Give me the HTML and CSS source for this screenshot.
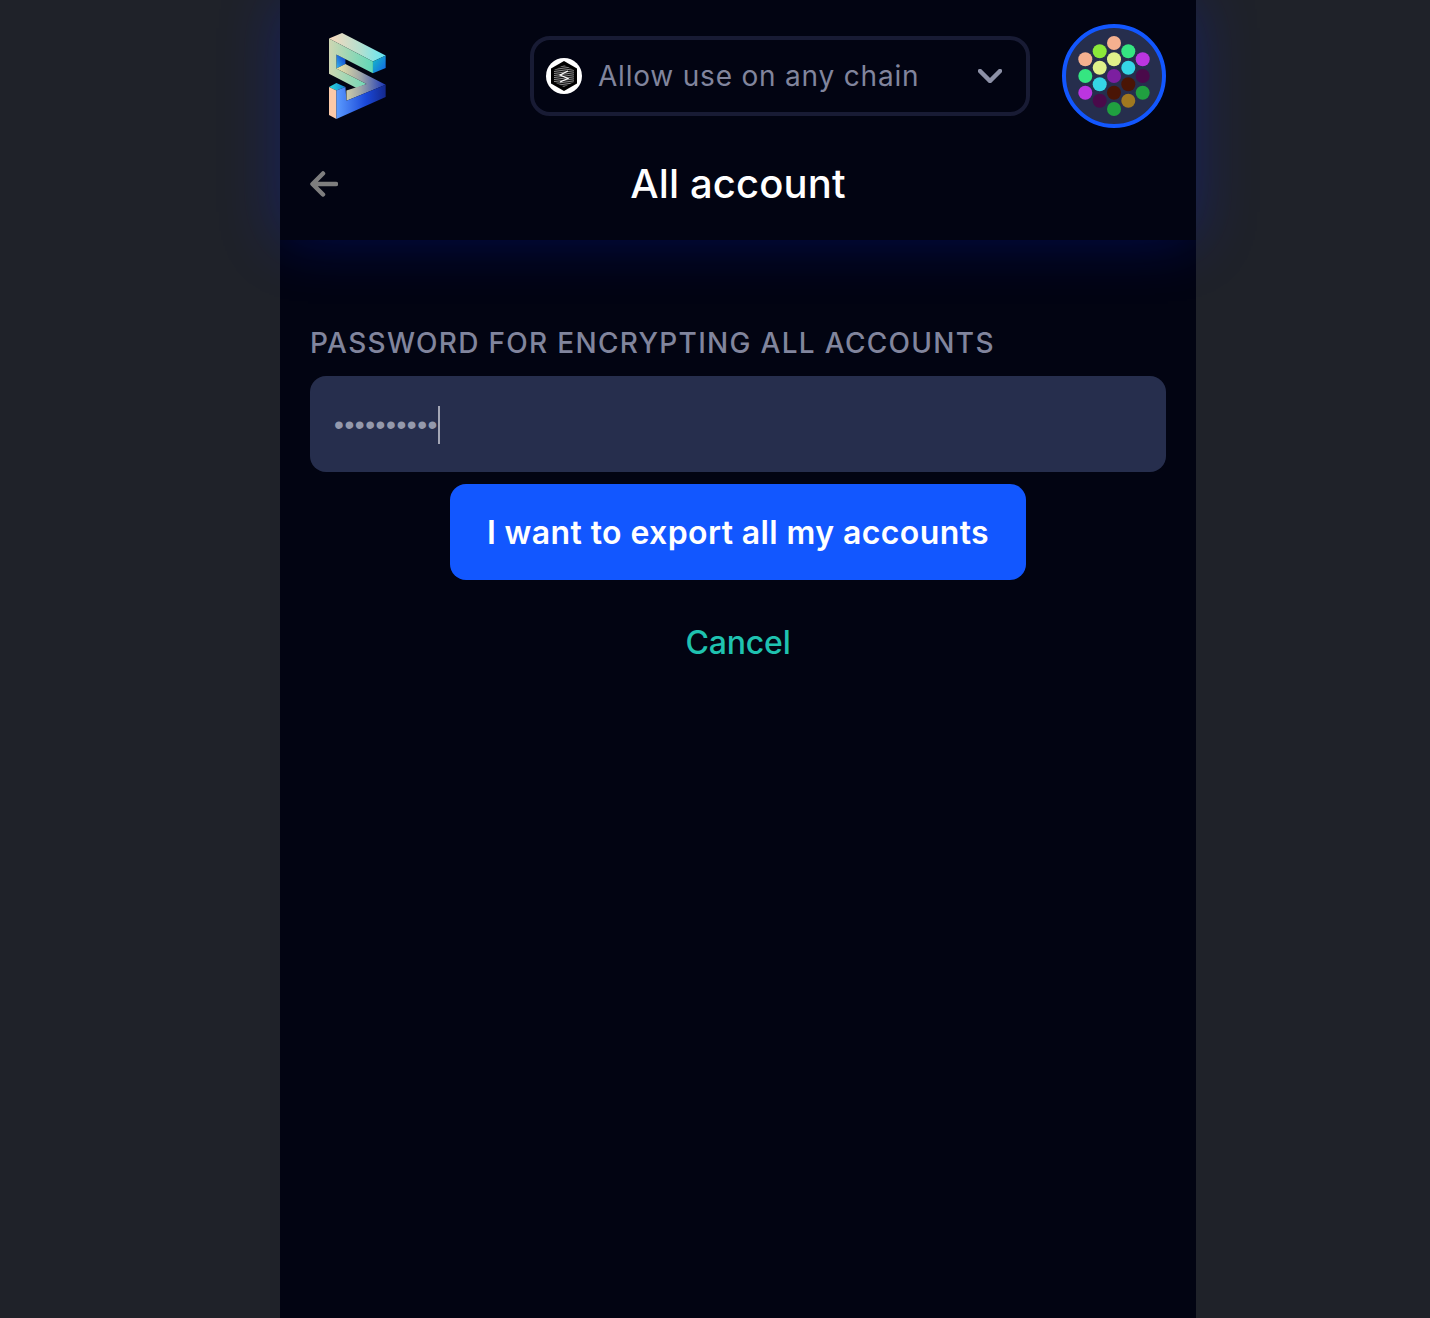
FILE: index.html
```html
<!DOCTYPE html>
<html lang="en">
<head>
<meta charset="utf-8">
<title>All account</title>
<link rel="stylesheet" href="styles.css">
</head>
<body>
<main class="panel">
  <header class="header">
    <div class="top-row">
      <svg class="logo" viewBox="58 41 170 256" aria-hidden="true">
        <defs>
          <linearGradient id="g-top" x1="0" y1="0" x2="1" y2="0"><stop offset="0" stop-color="#fbd8bc"/><stop offset=".55" stop-color="#b5e0cf"/><stop offset="1" stop-color="#62e6f4"/></linearGradient>
          <linearGradient id="g-end" x1="0" y1="0" x2="1" y2="1"><stop offset="0" stop-color="#18c0c4"/><stop offset="1" stop-color="#1060e8"/></linearGradient>
          <linearGradient id="g-front" x1="0" y1="0" x2="1" y2="0"><stop offset="0" stop-color="#cfd6b2"/><stop offset="1" stop-color="#5fd8b8"/></linearGradient>
          <linearGradient id="g-hole" x1="0" y1="1" x2="1" y2="0"><stop offset="0" stop-color="#38b8f0"/><stop offset="1" stop-color="#0a30c8"/></linearGradient>
          <linearGradient id="g-mid" x1="0" y1="0" x2="1" y2="0"><stop offset="0" stop-color="#f0e8a8"/><stop offset=".5" stop-color="#9ca4a8"/><stop offset="1" stop-color="#1a36b8"/></linearGradient>
          <linearGradient id="g-low" x1="0" y1="0" x2="1" y2="0"><stop offset="0" stop-color="#5c9cff"/><stop offset=".6" stop-color="#1a48d8"/><stop offset="1" stop-color="#14288c"/></linearGradient>
          <linearGradient id="g-cap" x1="0" y1="0" x2="1" y2="0"><stop offset="0" stop-color="#30dcd8"/><stop offset="1" stop-color="#1080d8"/></linearGradient>
        </defs>
        <polygon points="58,57 97,41 227,108 189,126" fill="url(#g-top)"/>
        <polygon points="189,126 227,108 227,145 189,161" fill="url(#g-end)"/>
        <polygon points="80,105 107,118 107,133 80,147" fill="url(#g-hole)"/>
        <polygon points="58,57 189,126 189,161 80,105 80,147 170,193 140,205 58,162" fill="url(#g-front)"/>
        <polygon points="80,147 107,133 227,195 110,243 110,212 170,193" fill="url(#g-mid)"/>
        <polygon points="58,202 80,190 107,202 80,212" fill="url(#g-cap)"/>
        <polygon points="58,202 80,212 80,297 58,285" fill="#fbc9a8"/>
        <polygon points="80,212 107,202 110,243 227,195 227,232 80,297" fill="url(#g-low)"/>
      </svg>
      <div class="chain-select">
        <svg class="chain-icon" viewBox="0 0 36 36" aria-hidden="true">
          <defs>
            <pattern id="stripes" width="2" height="2" patternUnits="userSpaceOnUse" patternTransform="rotate(-8)">
              <rect width="2" height="2" fill="#0a0a0a"/>
              <rect width="2" height="1" fill="#8a8a8a"/>
            </pattern>
          </defs>
          <circle cx="18" cy="18" r="18" fill="#fff"/>
          <polygon points="18,3 31,10.5 31,25.500 18,33 5,25.500 5,10.5" fill="#000"/>
          <polygon points="18,7 28,12 28,24 18,29 8,24 8,12" fill="url(#stripes)"/>
          <path class="chain-mark" d="M22 13 14 17l8 3.500-8 3.500"/>
        </svg>
        <span class="chain-label">Allow use on any chain</span>
        <svg class="chevron" viewBox="0 0 24 14" aria-hidden="true"><path d="M2 2l10 10L22 2"/></svg>
      </div>
      <div class="avatar">
        <svg class="avatar-dots" viewBox="0 0 104 104" aria-hidden="true">
          <circle cx="52" cy="19" r="7" fill="#f5b08f"/>
          <circle cx="37.7" cy="27.3" r="7" fill="#8be83a"/>
          <circle cx="66.3" cy="27.3" r="7" fill="#35e581"/>
          <circle cx="23.3" cy="35.3" r="7" fill="#f5b08f"/>
          <circle cx="52" cy="35.3" r="7" fill="#e0f08a"/>
          <circle cx="80.7" cy="35.3" r="7" fill="#bb35e0"/>
          <circle cx="37.7" cy="43.7" r="7" fill="#e0f08a"/>
          <circle cx="66.3" cy="43.7" r="7" fill="#35d5e5"/>
          <circle cx="23.3" cy="52" r="7" fill="#35e581"/>
          <circle cx="52" cy="52" r="7" fill="#7c1fa0"/>
          <circle cx="80.7" cy="52" r="7" fill="#4a0a4a"/>
          <circle cx="37.7" cy="60.3" r="7" fill="#35d5e5"/>
          <circle cx="66.3" cy="60.3" r="7" fill="#4a1505"/>
          <circle cx="23.3" cy="68.7" r="7" fill="#bb35e0"/>
          <circle cx="52" cy="68.7" r="7" fill="#4a1505"/>
          <circle cx="80.7" cy="68.7" r="7" fill="#20a040"/>
          <circle cx="37.7" cy="76.7" r="7" fill="#4a0a4a"/>
          <circle cx="66.3" cy="76.7" r="7" fill="#a07820"/>
          <circle cx="52" cy="85" r="7" fill="#20a040"/>
        </svg>
      </div>
    </div>
    <div class="title-row">
      <svg class="back" viewBox="0 0 28 28" aria-hidden="true"><path d="M26 14H3M13 3.500 2.500 14 13 24.500"/></svg>
      <h1 class="title">All account</h1>
      <span></span>
    </div>
  </header>
  <section class="content">
    <label class="field-label">Password for encrypting all accounts</label>
    <div class="password-input"><span class="dots">••••••••••</span><span class="caret"></span></div>
    <button class="primary" type="button">I want to export all my accounts</button>
    <a class="cancel">Cancel</a>
  </section>
</main>
</body>
</html>
```
FILE: styles.css
```css
* { box-sizing: border-box; }
html, body { height: 100%; }
body {
  margin: 0;
  padding-left: 280px;
  background: #1f2229;
  font-family: "Inter", "Liberation Sans", sans-serif;
  overflow: hidden;
}
.panel {
  width: 916px;
  height: 1318px;
  background: #020412;
  display: flex;
  flex-direction: column;
}
.header {
  height: 240px;
  padding: 24px 30px 0;
  background: #020412;
  box-shadow: 0 0 56px rgba(0, 30, 220, .3);
  position: relative;
  z-index: 1;
}
.top-row { display: flex; align-items: center; height: 104px; }
.logo { width: 57px; height: 86px; margin-left: 19px; flex: none; }
.chain-select {
  width: 500px;
  height: 80px;
  margin-left: auto;
  margin-right: 32px;
  display: flex;
  align-items: center;
  padding: 0 24px 0 12px;
  border: 4px solid #181b34;
  border-radius: 20px;
}
.chain-icon { width: 36px; height: 36px; flex: none; }
.chain-mark { fill: none; stroke: #fff; stroke-width: 1.200; }
.chain-label { margin-left: 16px; flex: 1; font-size: 28px; letter-spacing: .8px; color: #81859d; white-space: nowrap; }
.chevron { width: 24px; height: 14px; fill: none; stroke: #8c90a6; stroke-width: 4.500; stroke-linecap: round; stroke-linejoin: round; }
.avatar {
  width: 104px;
  height: 104px;
  flex: none;
  border-radius: 50%;
  border: 4px solid #1257ff;
  background: #262e4d;
  position: relative;
}
.avatar-dots { position: absolute; left: -4px; top: -4px; width: 104px; height: 104px; }
.title-row {
  height: 112px;
  display: grid;
  grid-template-columns: 1fr auto 1fr;
  align-items: center;
}
.back { width: 28px; height: 28px; fill: none; stroke: #7e7e7e; stroke-width: 4.500; stroke-linecap: round; stroke-linejoin: round; }
.title { margin: 0; font-size: 40px; line-height: 48px; font-weight: 500; color: #fff; letter-spacing: .15px; }
.content {
  position: relative;
  display: flex;
  flex-direction: column;
  align-items: center;
  padding: 85px 30px 0;
}
.field-label {
  align-self: stretch;
  height: 36px;
  line-height: 36px;
  font-size: 28px;
  font-weight: 500;
  letter-spacing: 1.300px;
  text-transform: uppercase;
  color: #81859d;
  white-space: nowrap;
  margin-bottom: 15px;
}
.password-input {
  align-self: stretch;
  height: 96px;
  background: #262e4d;
  border-radius: 16px;
  padding: 1px 24px 0;
  display: flex;
  align-items: center;
}
.dots { font-family: "Liberation Sans", sans-serif; font-size: 28px; letter-spacing: .6px; color: #9499ac; line-height: 1; }
.caret { width: 2px; height: 38px; background: #a3a6b5; }
.primary {
  width: 576px;
  height: 96px;
  margin-top: 12px;
  border: 0;
  border-radius: 16px;
  background: #1257ff;
  color: #fff;
  font: 600 32px "Inter", "Liberation Sans", sans-serif;
  letter-spacing: .4px;
}
.cancel {
  margin-top: 40px;
  font-size: 32px;
  line-height: 46px;
  font-weight: 500;
  letter-spacing: -.2px;
  color: #1fc2b0;
}
```
